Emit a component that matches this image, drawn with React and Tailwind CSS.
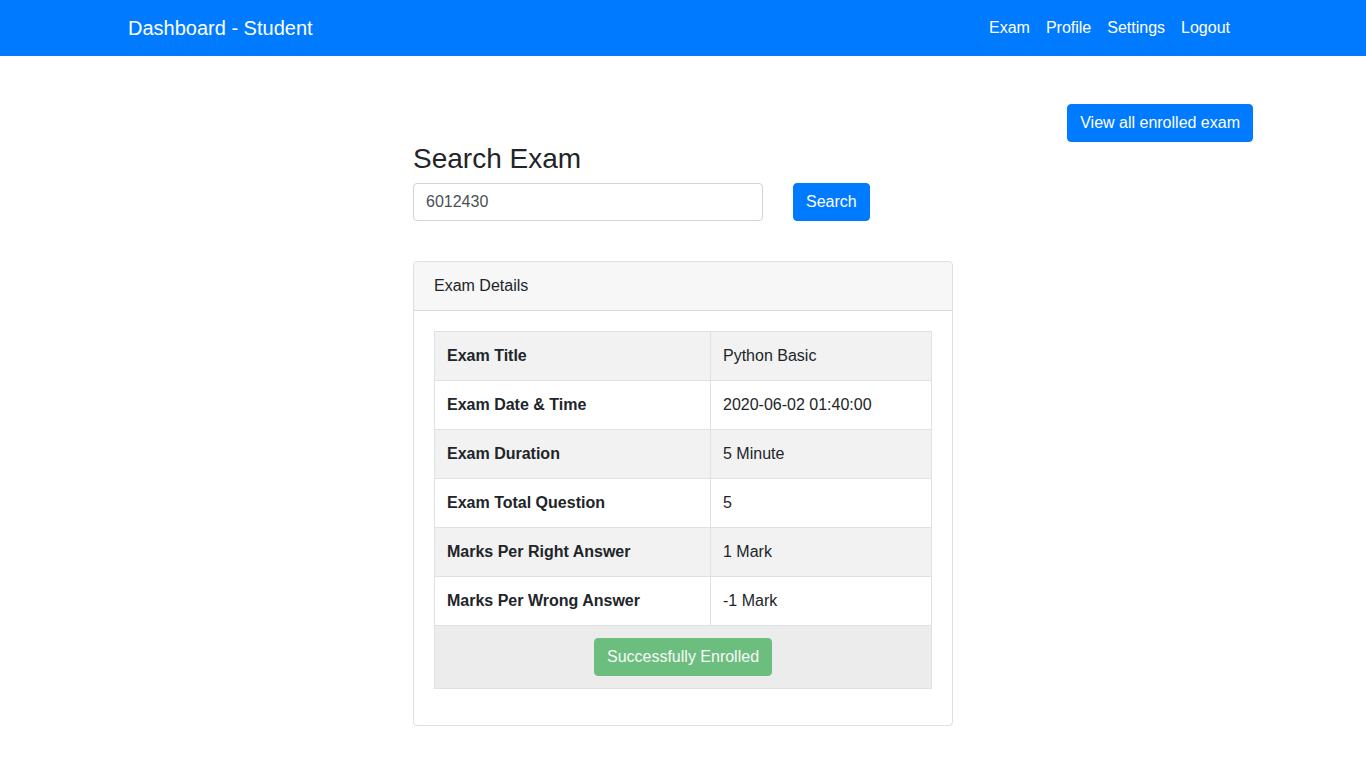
export default function App() {
  const rows = [
    ["Exam Title", "Python Basic"],
    ["Exam Date & Time", "2020-06-02 01:40:00"],
    ["Exam Duration", "5 Minute"],
    ["Exam Total Question", "5"],
    ["Marks Per Right Answer", "1 Mark"],
    ["Marks Per Wrong Answer", "-1 Mark"],
  ];
  return (
    <div className="min-h-screen bg-white font-['Liberation_Sans',Arial,sans-serif] text-[16px] leading-[24px] text-[#212529]">
      <nav className="bg-[#007bff] h-[56px]">
        <div className="w-[1140px] mx-auto px-[15px] h-full flex items-center justify-between">
          <span className="text-white text-[20px] leading-[30px]">Dashboard - Student</span>
          <ul className="flex">
            {["Exam", "Profile", "Settings", "Logout"].map((l) => (
              <li key={l} className="px-[8px] text-white">{l}</li>
            ))}
          </ul>
        </div>
      </nav>
      <div className="w-[1140px] mx-auto px-[15px]">
        <div className="flex justify-end mt-[48px] -mr-[15px]">
          <button className="bg-[#007bff] text-white rounded-[4px] px-[12px] py-[6px] border border-[#007bff] leading-[24px]">
            View all enrolled exam
          </button>
        </div>
        <div className="ml-[285px] w-[540px]">
          <h3 className="text-[28px] leading-[33px] mb-[8px] font-normal">Search Exam</h3>
          <div className="flex items-center">
            <div className="w-[350px] h-[38px] border border-[#ced4da] rounded-[4px] px-[12px] flex items-center text-[#495057]">
              6012430
            </div>
            <button className="ml-[30px] h-[38px] bg-[#007bff] text-white rounded-[4px] px-[12px] border border-[#007bff]">
              Search
            </button>
          </div>
          <div className="mt-[40px] border border-[rgba(0,0,0,0.125)] rounded-[4px]">
            <div className="bg-[#f7f7f7] px-[20px] py-[12px] border-b border-[rgba(0,0,0,0.125)] rounded-t-[4px]">
              Exam Details
            </div>
            <div className="p-[20px]">
              <table className="w-full border-collapse mb-[16px]">
                <tbody>
                  {rows.map(([k, v], i) => (
                    <tr key={k} className={i % 2 === 0 ? "bg-[#f2f2f2]" : "bg-white"}>
                      <td className="w-[276px] border border-[#dee2e6] px-[12px] py-[12px] font-bold">{k}</td>
                      <td className="border border-[#dee2e6] px-[12px] py-[12px]">{v}</td>
                    </tr>
                  ))}
                  <tr className="bg-[#ececec]">
                    <td colSpan={2} className="border border-[#dee2e6] px-[12px] py-[12px] text-center">
                      <button className="bg-[#28a745] opacity-65 text-white rounded-[4px] px-[12px] h-[38px] border border-[#28a745] align-middle">
                        Successfully Enrolled
                      </button>
                    </td>
                  </tr>
                </tbody>
              </table>
            </div>
          </div>
        </div>
      </div>
    </div>
  );
}
